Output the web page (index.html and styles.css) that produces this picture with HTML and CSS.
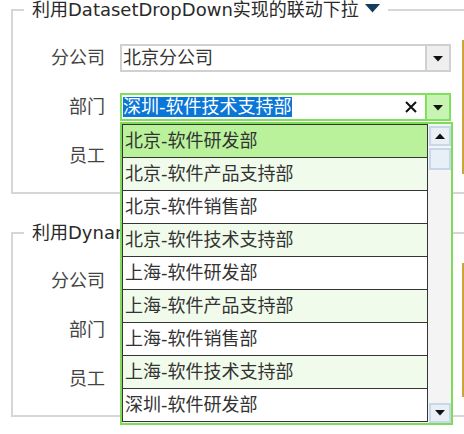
FILE: index.html
```html
<!DOCTYPE html>
<html lang="zh">
<head>
<meta charset="utf-8">
<title>联动下拉</title>
<link rel="stylesheet" href="styles.css">
</head>
<body>
<div class="page">
  <fieldset class="group">
    <legend class="group-title">利用DatasetDropDown实现的联动下拉<span class="title-caret"><svg width="15" height="9" viewBox="0 0 15 9"><path d="M0 0H15L7.5 8.5Z" fill="#123d5e"/></svg></span></legend>
    <div class="group-body">
      <div class="form">
        <div class="row">
          <span class="row-label">分公司</span>
          <div class="combo">
            <div class="combo-text">北京分公司</div>
            <div class="combo-btn"><svg width="10" height="6" viewBox="0 0 10 6"><path d="M0 0H10L5 5.5Z" fill="#111"/></svg></div>
          </div>
        </div>
        <div class="row">
          <span class="row-label">部门</span>
          <div class="combo combo-active">
            <div class="combo-text"><span class="sel">深圳-软件技术支持部</span><span class="clear"><svg width="12" height="12" viewBox="0 0 12 12"><path d="M1 1L11 11M11 1L1 11" stroke="#111" stroke-width="2"/></svg></span></div>
            <div class="combo-btn"><svg width="10" height="6" viewBox="0 0 10 6"><path d="M0 0H10L5 5.5Z" fill="#111"/></svg></div>
          </div>
        </div>
        <div class="row">
          <span class="row-label">员工</span>
          <div class="combo">
            <div class="combo-text"></div>
            <div class="combo-btn"><svg width="10" height="6" viewBox="0 0 10 6"><path d="M0 0H10L5 5.5Z" fill="#111"/></svg></div>
          </div>
        </div>
      </div>
      <div class="side"></div>
    </div>
  </fieldset>

  <fieldset class="group group-second">
    <legend class="group-title">利用DynamicDropDown实现的联动下拉<span class="title-caret"><svg width="15" height="9" viewBox="0 0 15 9"><path d="M0 0H15L7.5 8.5Z" fill="#123d5e"/></svg></span></legend>
    <div class="group-body">
      <div class="form">
        <div class="row">
          <span class="row-label">分公司</span>
          <div class="combo">
            <div class="combo-text"></div>
            <div class="combo-btn"><svg width="10" height="6" viewBox="0 0 10 6"><path d="M0 0H10L5 5.5Z" fill="#111"/></svg></div>
          </div>
        </div>
        <div class="row">
          <span class="row-label">部门</span>
          <div class="combo">
            <div class="combo-text"></div>
            <div class="combo-btn"><svg width="10" height="6" viewBox="0 0 10 6"><path d="M0 0H10L5 5.5Z" fill="#111"/></svg></div>
          </div>
        </div>
        <div class="row">
          <span class="row-label">员工</span>
          <div class="combo">
            <div class="combo-text"></div>
            <div class="combo-btn"><svg width="10" height="6" viewBox="0 0 10 6"><path d="M0 0H10L5 5.5Z" fill="#111"/></svg></div>
          </div>
        </div>
      </div>
      <div class="side"></div>
    </div>
  </fieldset>

  <div class="popup">
    <ul class="list">
      <li class="item item-hover">北京-软件研发部</li>
      <li class="item item-alt">北京-软件产品支持部</li>
      <li class="item">北京-软件销售部</li>
      <li class="item item-alt">北京-软件技术支持部</li>
      <li class="item">上海-软件研发部</li>
      <li class="item item-alt">上海-软件产品支持部</li>
      <li class="item">上海-软件销售部</li>
      <li class="item item-alt">上海-软件技术支持部</li>
      <li class="item">深圳-软件研发部</li>
    </ul>
    <div class="scrollbar">
      <div class="sb-btn"><svg width="10" height="6" viewBox="0 0 10 6"><path d="M0 6H10L5 0.5Z" fill="#111"/></svg></div>
      <div class="sb-thumb"></div>
      <div class="sb-btn sb-down"><svg width="10" height="6" viewBox="0 0 10 6"><path d="M0 0H10L5 5.5Z" fill="#111"/></svg></div>
    </div>
  </div>
</div>
</body>
</html>
```

FILE: styles.css
```css
html, body {
  margin: 0;
  padding: 0;
  overflow: hidden;
  background: #ffffff;
}

.page {
  position: relative;
  width: 464px;
  height: 434px;
  overflow: hidden;
  font-family: "DejaVu Sans", "Noto Sans CJK SC", sans-serif;
  font-size: 18px;
  color: #333333;
}

.group {
  box-sizing: border-box;
  width: 640px;
  min-width: 0;
  margin: 0 0 0 11px;
  padding: 0 0 18px 0;
  border: 2px solid #d6d6d6;
}

.group-second {
  margin-top: 29px;
}

.group-title {
  margin-left: 11px;
  padding: 0 8px;
  line-height: 20px;
  height: 20px;
  color: #2a2a2a;
  white-space: nowrap;
}

.title-caret {
  display: inline-block;
  vertical-align: top;
  margin-top: 4px;
  margin-left: 6px;
  height: 9px;
}

.title-caret svg {
  display: block;
}

.group-body {
  display: flex;
  padding-top: 20px;
}

.form {
  display: flex;
  flex-direction: column;
  gap: 21px;
  padding: 4px 0;
}

.row {
  display: flex;
  align-items: center;
  height: 28px;
}

.row-label {
  width: 92px;
  margin-right: 15px;
  text-align: right;
  color: #444444;
  line-height: 20px;
}

.combo {
  box-sizing: border-box;
  display: flex;
  width: 331px;
  height: 28px;
  border: 2px solid #d0d0d0;
  background: #ffffff;
}

.combo-text {
  flex: 1;
  display: flex;
  align-items: center;
  padding-left: 1px;
  line-height: 20px;
  color: #333333;
  white-space: nowrap;
}

.combo-btn {
  width: 24px;
  border-left: 2px solid #d0d0d0;
  background: #efefef;
  display: flex;
  align-items: center;
  justify-content: center;
  padding-top: 2px;
  box-sizing: border-box;
}

.combo-btn svg {
  display: block;
}

.combo-active {
  border-color: #7fe05a;
}

.combo-active .combo-btn {
  border-left-color: #7fe05a;
  background: #c7f4b2;
}

.sel {
  background: #0a76d6;
  color: #ffffff;
  line-height: 20px;
}

.clear {
  margin-left: auto;
  margin-right: 8px;
  display: flex;
  align-items: center;
}

.clear svg {
  display: block;
}

.side {
  flex: 1;
  margin-left: 11px;
  border-left: 2px solid #cba43c;
}

.popup {
  position: absolute;
  left: 120px;
  top: 122px;
  box-sizing: border-box;
  width: 333px;
  height: 303px;
  border: 2px solid #7fdc58;
  background: #f4f4f4;
  display: flex;
  overflow: hidden;
}

.list {
  list-style: none;
  margin: 0;
  padding: 0;
  width: 307px;
  box-sizing: border-box;
  border: 1px solid #353535;
  border-bottom: none;
  align-self: flex-start;
}

.item {
  height: 32px;
  line-height: 32px;
  padding-left: 2px;
  border-bottom: 1px solid #353535;
  background: #ffffff;
  color: #333333;
  white-space: nowrap;
}

.item-alt {
  background: #f1fbeb;
}

.item-hover {
  background: #b9f29b;
}

.scrollbar {
  flex: 1;
  display: flex;
  flex-direction: column;
  padding: 2px 0 0 1px;
}

.sb-btn,
.sb-thumb {
  box-sizing: border-box;
  width: 22px;
  border: 2px solid #c6d8ea;
  background: #e8eff7;
}

.sb-btn {
  height: 20px;
  display: flex;
  align-items: center;
  justify-content: center;
}

.sb-btn svg {
  display: block;
}

.sb-thumb {
  height: 22px;
  margin-top: 2px;
}

.sb-down {
  margin-top: auto;
}
```
